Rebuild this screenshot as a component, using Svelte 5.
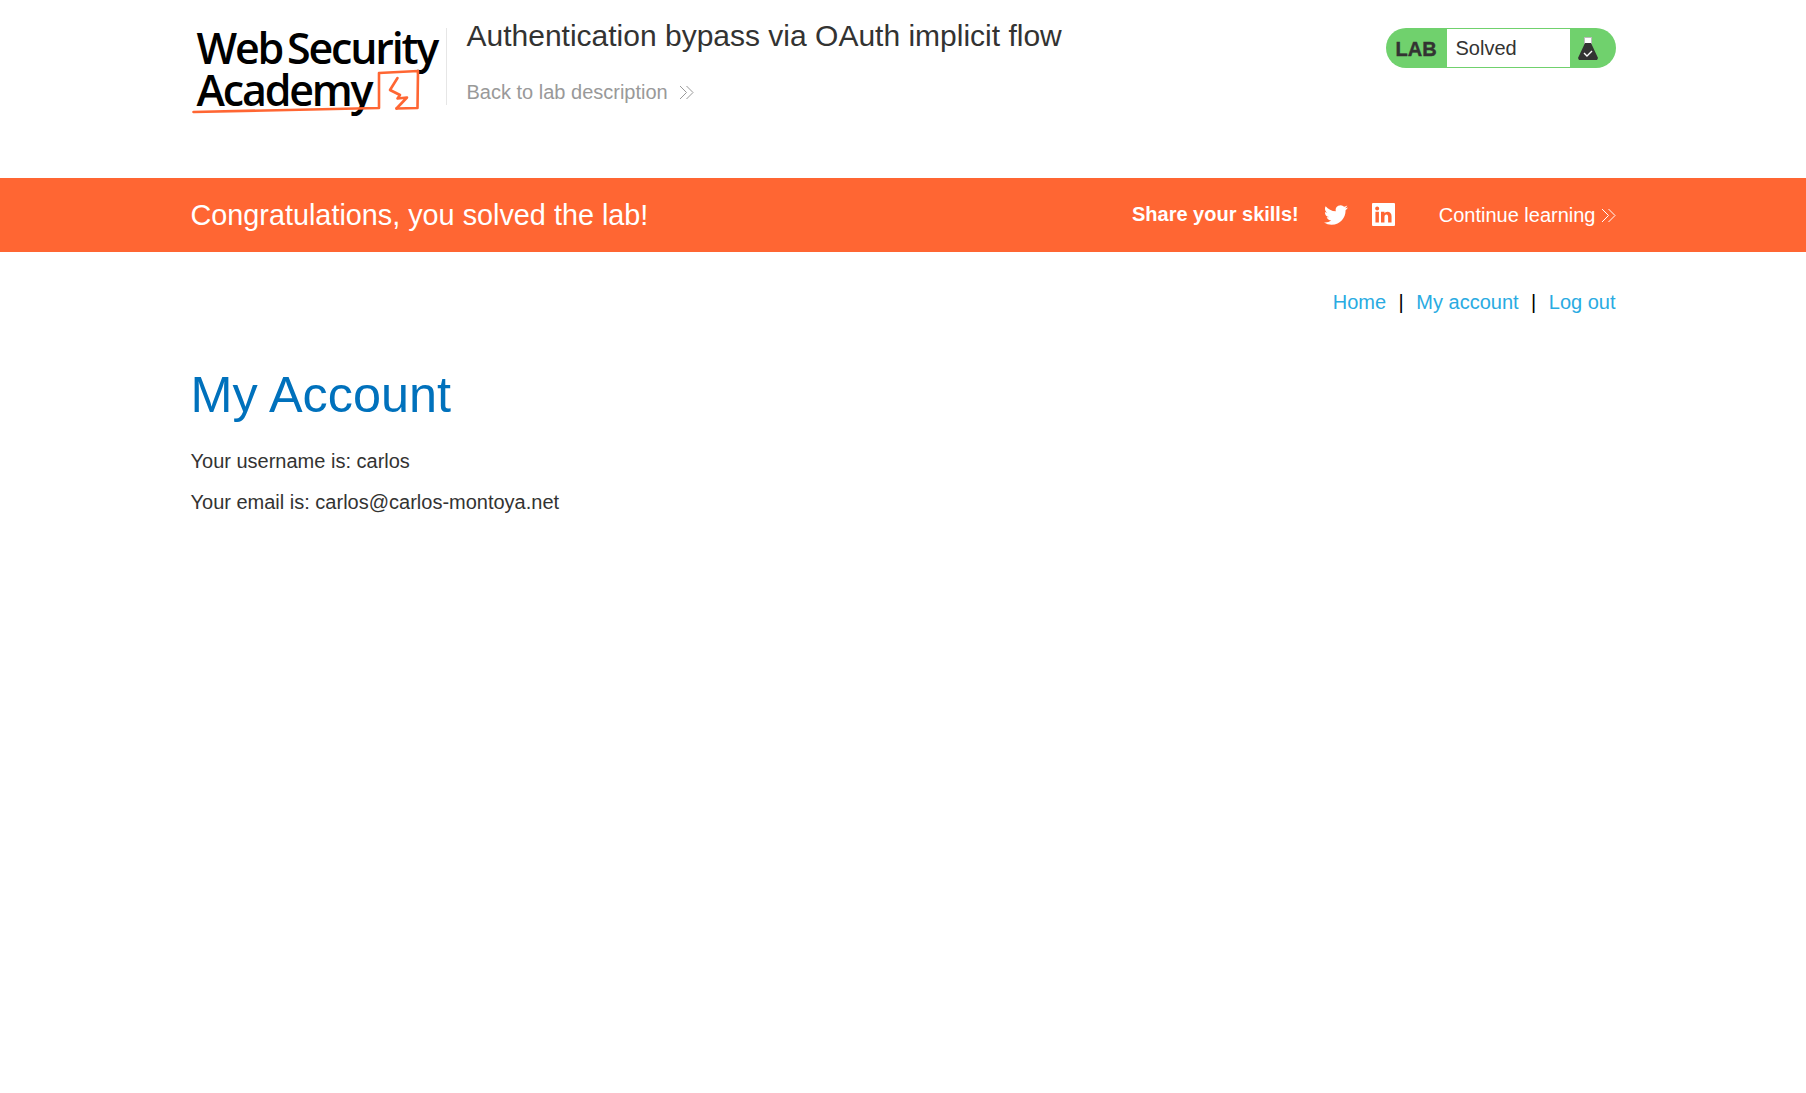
<script>
  let username = 'carlos';
  let email = 'carlos@carlos-montoya.net';
</script>

<div class="page">
  <header class="lab-header">
    <div class="container header-row">
      <a class="logo" href="#top">
        <span class="logo-text">
          <span class="logo-line one">Web Security</span>
          <span class="logo-line two">Academy</span>
        </span>
        <svg class="logo-mark" viewBox="0 0 256 100" width="256" height="100">
          <path fill="none" stroke="#ff6633" stroke-width="2.6" stroke-linecap="round" stroke-linejoin="round" d="M2.500 84 C60 83 130 81 188 80 L188 45 L227 43 L226.500 80 L205.500 80.500"/>
          <path fill="none" stroke="#ff6633" stroke-width="2.6" stroke-linecap="round" stroke-linejoin="round" d="M206.500 50 L199 62 L209 67 L206.500 70.500 L216 69.500 L205.500 80.500"/>
        </svg>
      </a>
      <div class="title-block">
        <h2>Authentication bypass via OAuth implicit flow</h2>
        <a class="back" href="#top">
          Back to lab description
          <svg class="chev" viewBox="0 0 15 15" width="15" height="15"><path fill="none" stroke="currentColor" d="M1 1l6.500 6.500L1 14M7.500 1L14 7.500 7.500 14"/></svg>
        </a>
      </div>
      <div class="status">
        <span class="status-lab">LAB</span>
        <span class="status-text">Solved</span>
        <span class="status-icon">
          <svg viewBox="0 0 20 24" width="20" height="24">
            <rect x="6.500" y="1.500" width="7" height="6" fill="#fff" stroke="#bbb" stroke-width="1"/>
            <path fill="#333" d="M7 7h6l7 15-1 2H1l-1-2z"/>
            <path fill="none" stroke="#fff" stroke-width="1.400" d="M6 17l3 3 5-5"/>
          </svg>
        </span>
      </div>
    </div>
  </header>

  <section class="banner">
    <div class="container banner-row">
      <h4>Congratulations, you solved the lab!</h4>
      <div class="share">
        <span class="share-label">Share your skills!</span>
        <svg class="twitter" viewBox="0 0 24 24" width="24" height="24"><path fill="#fff" d="M23.950 4.570a10 10 0 0 1-2.820.770 4.960 4.960 0 0 0 2.160-2.720c-.950.550-2 .950-3.130 1.180a4.920 4.920 0 0 0-8.380 4.480C7.690 8.100 4.070 6.130 1.640 3.160a4.820 4.820 0 0 0-.660 2.470c0 1.710.870 3.210 2.190 4.100a4.900 4.900 0 0 1-2.230-.620v.060a4.920 4.920 0 0 0 3.950 4.830 5 5 0 0 1-2.210.080 4.940 4.940 0 0 0 4.600 3.420A9.870 9.870 0 0 1 0 19.540a14 14 0 0 0 7.560 2.210c9.050 0 14-7.500 14-13.980 0-.210 0-.420-.020-.630a9.940 9.940 0 0 0 2.460-2.550z"/></svg>
        <svg class="linkedin" viewBox="0 0 24 24" width="23" height="23"><path fill="#fff" fill-rule="evenodd" d="M1 0h22a1 1 0 0 1 1 1v22a1 1 0 0 1-1 1H1a1 1 0 0 1-1-1V1a1 1 0 0 1 1-1zM3.600 9.200v11.200h3.600V9.200zM5.400 3.600a2.100 2.100 0 1 0 0 4.200 2.100 2.100 0 0 0 0-4.200zM9.400 9.200v11.200H13v-5.800c0-1.700.7-2.700 2-2.700s1.800.9 1.800 2.700v5.800h3.600v-6.600c0-3.200-1.700-4.800-4.200-4.800-1.600 0-2.700.8-3.200 1.800V9.200z"/></svg>
        <a class="continue" href="#top">
          Continue learning
          <svg class="chev small" viewBox="0 0 15 15" width="15" height="15"><path fill="none" stroke="currentColor" d="M1 1l6.500 6.500L1 14M7.500 1L14 7.500 7.500 14"/></svg>
        </a>
      </div>
    </div>
  </section>

  <main class="container">
    <nav class="top-links">
      <a href="#top">Home</a><span class="sep">|</span><a href="#top">My account</a><span class="sep">|</span><a href="#top">Log out</a>
    </nav>
    <h1>My Account</h1>
    <p>Your username is: {username}</p>
    <p>Your email is: {email}</p>
  </main>
</div>

<style>
:global(body) {
  margin: 0;
  background: #fff;
  font-family: "Liberation Sans", Arial, sans-serif;
  color: #333332;
}
.container {
  width: 1425px;
  margin: 0 auto;
}
a {
  text-decoration: none;
}
.lab-header {
  height: 178px;
}
.header-row {
  display: flex;
  align-items: flex-start;
}
.logo {
  position: relative;
  display: block;
  width: 256px;
  height: 77px;
  margin-top: 28px;
  border-right: 1px solid #e6e6e6;
  box-sizing: border-box;
  color: #000;
}
.logo-text {
  display: flex;
  flex-direction: column;
  margin-top: -1px;
  font-family: "Open Sans", sans-serif;
  font-size: 43px;
  font-weight: 600;
  line-height: 42px;
  letter-spacing: -2.2px;
  white-space: nowrap;
}
.logo-line.one {
  margin-left: 6px;
  word-spacing: -4px;
}
.logo-line.two {
  margin-left: 6px;
}
.logo-mark {
  position: absolute;
  left: 0;
  top: 0;
  overflow: visible;
}
.title-block {
  flex: 1;
  margin-left: 20px;
  padding-top: 17px;
}
h2 {
  margin: 0;
  font-size: 30px;
  font-weight: 400;
  line-height: 38px;
  color: #333332;
}
.back {
  display: inline-flex;
  align-items: center;
  gap: 11px;
  margin-top: 26px;
  font-size: 20px;
  color: #999;
}
.status {
  display: flex;
  align-items: stretch;
  width: 230px;
  height: 40px;
  margin-top: 28px;
  border-radius: 20px;
  background: #70d16d;
  box-sizing: border-box;
  overflow: hidden;
  padding: 1px 0;
}
.status-lab {
  width: 61px;
  padding-left: 10px;
  box-sizing: border-box;
  font-size: 20px;
  font-weight: 700;
  line-height: 41px;
  color: #333332;
  -webkit-text-stroke: .4px #333332;
}
.status-text {
  width: 123px;
  padding-left: 9px;
  box-sizing: border-box;
  background: #fff;
  font-size: 20px;
  line-height: 38px;
}
.status-icon {
  display: flex;
  align-items: center;
  padding-left: 8px;
}
.banner {
  height: 74px;
  background: #ff6633;
  color: #fff;
}
.banner-row {
  display: flex;
  justify-content: space-between;
  align-items: center;
  height: 100%;
}
h4 {
  margin: 0;
  font-size: 28.8px;
  font-weight: 400;
}
.share {
  display: flex;
  align-items: center;
}
.share-label {
  margin-top: -2px;
  font-size: 20px;
  font-weight: 700;
}
.twitter {
  margin-left: 25px;
}
.linkedin {
  margin-left: 24px;
  margin-top: -1px;
}
.continue {
  display: inline-flex;
  align-items: center;
  gap: 5px;
  margin-left: 44px;
  font-size: 20px;
  color: #fff;
}
.top-links {
  display: flex;
  justify-content: flex-end;
  margin-top: 38px;
  font-size: 20px;
  line-height: 24px;
}
.top-links a {
  color: #29abe2;
}
.sep {
  margin: 0 12.5px;
  color: #000;
}
h1 {
  margin: 50px 0 0;
  font-size: 50.4px;
  font-weight: 400;
  line-height: 62px;
  color: #0071bc;
}
p {
  margin: 16px 0 0;
  font-size: 20px;
  line-height: 25px;
  color: #333332;
}
h1 + p {
  margin-top: 23px;
}
</style>
